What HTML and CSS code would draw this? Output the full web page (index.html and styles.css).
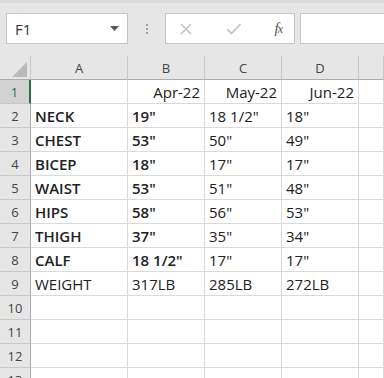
FILE: index.html
```html
<!DOCTYPE html>
<html lang="en">
<head>
    <meta charset="UTF-8">
    <title>Measurements</title>
    <link rel="stylesheet" href="styles.css">
</head>
<body>
    <div class="app">
        <!-- formula bar -->
        <div class="formula-bar">
            <div class="name-box">
                <span>F1</span>
                <svg class="drop" width="9" height="5" viewBox="0 0 9 5"><path d="M0 0h9L4.5 5z" fill="#5a5a5a"/></svg>
            </div>
            <div class="grip"><i></i><i></i><i></i></div>
            <div class="fx-buttons">
                <svg width="14" height="14" viewBox="0 0 14 14"><path d="M2 2l10 10M12 2L2 12" stroke="#c4c4c4" stroke-width="1.6" fill="none"/></svg>
                <svg width="16" height="14" viewBox="0 0 16 14"><path d="M1.5 7.5l4 4L14.5 2" stroke="#c4c4c4" stroke-width="1.8" fill="none"/></svg>
                <span class="fx">f<em>x</em></span>
            </div>
            <div class="formula-input"></div>
        </div>

        <!-- sheet -->
        <div class="sheet">
            <div class="row head">
                <div class="corner"><svg width="15" height="15" viewBox="0 0 15 15"><path d="M15 0v15H0z" fill="#b9b9b9"/></svg></div>
                <div class="col-h">A</div>
                <div class="col-h">B</div>
                <div class="col-h">C</div>
                <div class="col-h">D</div>
                <div class="col-h"></div>
            </div>
            <div class="row">
                <div class="row-h active">1</div>
                <div class="cell"></div>
                <div class="cell num">Apr-22</div>
                <div class="cell num">May-22</div>
                <div class="cell num">Jun-22</div>
                <div class="cell"></div>
            </div>
            <div class="row">
                <div class="row-h">2</div>
                <div class="cell strong">NECK</div>
                <div class="cell strong">19"</div>
                <div class="cell">18 1/2"</div>
                <div class="cell">18"</div>
                <div class="cell"></div>
            </div>
            <div class="row">
                <div class="row-h">3</div>
                <div class="cell strong">CHEST</div>
                <div class="cell strong">53"</div>
                <div class="cell">50"</div>
                <div class="cell">49"</div>
                <div class="cell"></div>
            </div>
            <div class="row">
                <div class="row-h">4</div>
                <div class="cell strong">BICEP</div>
                <div class="cell strong">18"</div>
                <div class="cell">17"</div>
                <div class="cell">17"</div>
                <div class="cell"></div>
            </div>
            <div class="row">
                <div class="row-h">5</div>
                <div class="cell strong">WAIST</div>
                <div class="cell strong">53"</div>
                <div class="cell">51"</div>
                <div class="cell">48"</div>
                <div class="cell"></div>
            </div>
            <div class="row">
                <div class="row-h">6</div>
                <div class="cell strong">HIPS</div>
                <div class="cell strong">58"</div>
                <div class="cell">56"</div>
                <div class="cell">53"</div>
                <div class="cell"></div>
            </div>
            <div class="row">
                <div class="row-h">7</div>
                <div class="cell strong">THIGH</div>
                <div class="cell strong">37"</div>
                <div class="cell">35"</div>
                <div class="cell">34"</div>
                <div class="cell"></div>
            </div>
            <div class="row">
                <div class="row-h">8</div>
                <div class="cell strong">CALF</div>
                <div class="cell strong">18 1/2"</div>
                <div class="cell">17"</div>
                <div class="cell">17"</div>
                <div class="cell"></div>
            </div>
            <div class="row">
                <div class="row-h">9</div>
                <div class="cell">WEIGHT</div>
                <div class="cell">317LB</div>
                <div class="cell">285LB</div>
                <div class="cell">272LB</div>
                <div class="cell"></div>
            </div>
            <div class="row">
                <div class="row-h">10</div>
                <div class="cell"></div><div class="cell"></div><div class="cell"></div><div class="cell"></div><div class="cell"></div>
            </div>
            <div class="row">
                <div class="row-h">11</div>
                <div class="cell"></div><div class="cell"></div><div class="cell"></div><div class="cell"></div><div class="cell"></div>
            </div>
            <div class="row">
                <div class="row-h">12</div>
                <div class="cell"></div><div class="cell"></div><div class="cell"></div><div class="cell"></div><div class="cell"></div>
            </div>
            <div class="row">
                <div class="row-h">13</div>
                <div class="cell"></div><div class="cell"></div><div class="cell"></div><div class="cell"></div><div class="cell"></div>
            </div>
        </div>
    </div>
</body>
</html>
```

FILE: styles.css
```css
* {
    margin: 0;
    padding: 0;
    box-sizing: border-box;
}

body {
    width: 384px;
    height: 378px;
    overflow: hidden;
    background: #fff;
    font-family: "Open Sans", "Liberation Sans", sans-serif;
}

.app {
    width: 384px;
    height: 378px;
    overflow: hidden;
    background: #e6e6e6;
}

/* formula bar */
.formula-bar {
    height: 56px;
    display: flex;
    align-items: flex-start;
    padding: 13px 0 0 6px;
    border-top: 3px solid #dadada;
    padding-top: 10px;
}

.name-box {
    width: 122px;
    height: 31px;
    background: #fff;
    border: 1px solid #c6c6c6;
    display: flex;
    align-items: center;
    justify-content: space-between;
    padding: 0 8px 0 8px;
    font-size: 15px;
    color: #333;
}

.grip {
    width: 37px;
    height: 31px;
    display: flex;
    flex-direction: column;
    align-items: center;
    justify-content: center;
    gap: 2px;
}

.grip i {
    width: 2px;
    height: 2px;
    background: #a0a0a0;
}

.fx-buttons {
    width: 130px;
    height: 31px;
    background: #fff;
    border: 1px solid #c6c6c6;
    display: flex;
    align-items: center;
    justify-content: space-between;
    padding: 0 12px 0 13px;
}

.fx {
    font-family: "Liberation Serif", serif;
    font-style: italic;
    font-size: 15px;
    color: #555;
    letter-spacing: -1px;
}

.fx em {
    font-size: 12px;
}

.formula-input {
    flex: 1;
    height: 31px;
    margin-left: 5px;
    background: #fff;
    border: 1px solid #c6c6c6;
    border-right: none;
}

/* sheet grid */
.sheet {
    background: #fff;
}

.row {
    display: grid;
    grid-template-columns: 31px 97px 77px 77px 77px 1fr;
    height: 24px;
}

.row.head {
    background: #e6e6e6;
}

.corner {
    display: flex;
    align-items: flex-end;
    justify-content: flex-end;
    padding: 0 3px 2px 0;
    border-right: 1px solid #c8c8c8;
    border-bottom: 1px solid #ababab;
}

.col-h {
    display: flex;
    align-items: center;
    justify-content: center;
    font-size: 13px;
    color: #444;
    border-right: 1px solid #c8c8c8;
    border-bottom: 1px solid #ababab;
}

.row-h {
    background: #e6e6e6;
    display: flex;
    align-items: center;
    justify-content: center;
    font-size: 13px;
    color: #444;
    border-right: 1px solid #ababab;
    border-bottom: 1px solid #c8c8c8;
}

.row-h.active {
    background: #d2d2d2;
    color: #217346;
    border-right: 2px solid #217346;
}

.cell {
    display: flex;
    align-items: flex-end;
    padding: 0 4px 1px;
    font-size: 15px;
    line-height: 20px;
    color: #222;
    white-space: nowrap;
    border-right: 1px solid #dadada;
    border-bottom: 1px solid #dadada;
}

.cell.num {
    justify-content: flex-end;
}

.cell.strong {
    font-weight: 600;
}
```
